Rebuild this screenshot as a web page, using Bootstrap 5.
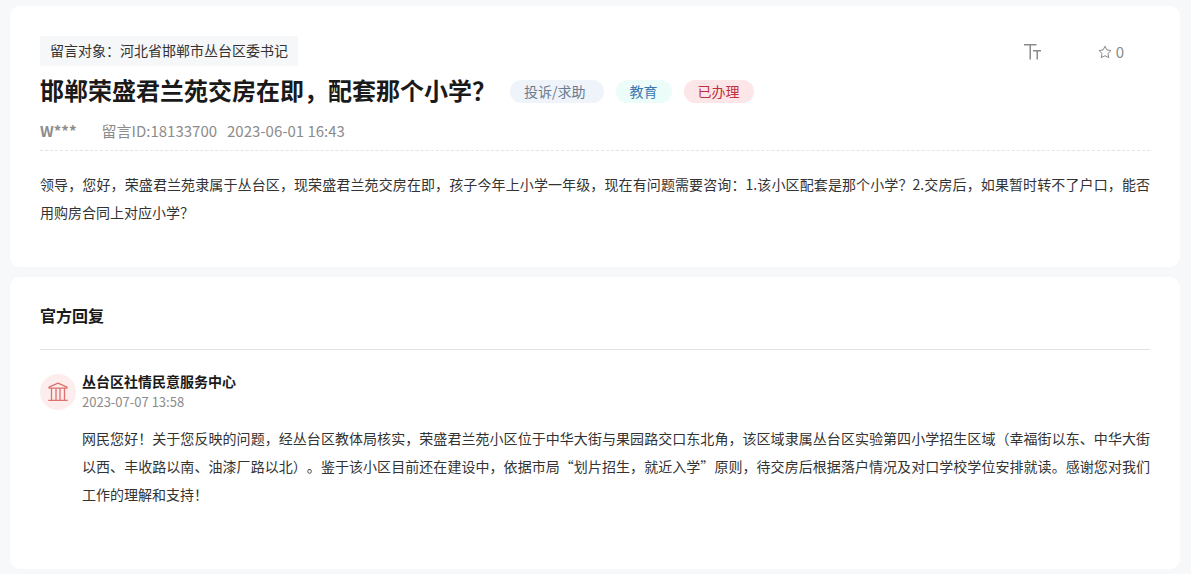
<!DOCTYPE html>
<html lang="zh-CN">
<head>
<meta charset="utf-8">
<meta name="viewport" content="width=device-width, initial-scale=1">
<title>邯郸荣盛君兰苑交房在即，配套那个小学？</title>
<link href="https://cdn.jsdelivr.net/npm/bootstrap@5.3.0/dist/css/bootstrap.min.css" rel="stylesheet">
<style>
  body { background: #f7f8fa; color: #333; font-family: "Noto Sans CJK SC", "Noto Sans", sans-serif; font-size: 14px; line-height: 20px; text-spacing-trim: space-all; }
  .page { padding: 6px 11px 5px 10px; gap: 10px; }
  .panel { background: #fff; border-radius: 10px; padding: 30px 30px 41px; }
  .panel-reply { padding: 22px 30px 61px; }
  .target { background: #f6f7f9; padding: 4px 10px 6px; }
  .tools { gap: 56px; padding: 6px 26px 0 0; color: #8a8a8a; }
  .tool { color: inherit; font-size: 15px; line-height: 20px; gap: 4px; }
  .title-row { column-gap: 14px; padding-top: 6px; }
  .title { font-size: 24px; line-height: 36px; font-weight: 700; color: #1a1a1a; }
  .tags { gap: 12px; padding-top: 2px; }
  .tag { border-radius: 12px; padding: 0 14px; line-height: 23px; }
  .tag-type { background: #eff3fa; color: #6a7b90; padding-right: 18px; }
  .tag-field { background: #ecfcf9; color: #3a78b0; }
  .tag-state { background: #fce6e8; color: #c02f40; }
  .meta { color: #8c8c8c; font-size: 15px; line-height: 24px; padding: 11px 0 7px; border-bottom: 1px dashed #e4e4e4; column-gap: 10px; }
  .author { margin-right: 15px; }
  .words { line-height: 28px; text-align: justify; }
  .message { padding-top: 19px; }
  .reply-title { font-size: 16px; line-height: 32px; font-weight: 700; color: #1a1a1a; padding-bottom: 18px; border-bottom: 1px solid #e3e3e3; }
  .reply { gap: 6px; padding-top: 21px; }
  .avatar { width: 36px; height: 36px; background: #fdeeed; margin-top: 3px; }
  .office { font-weight: 700; color: #1a1a1a; }
  .reply-date { color: #8c8c8c; font-size: 13px; line-height: 22px; }
  .answer { padding-top: 11px; }
</style>
</head>
<body>
<main class="page d-flex flex-column">
  <article class="panel">
    <div class="d-flex justify-content-between align-items-start">
      <div class="target">留言对象：河北省邯郸市丛台区委书记</div>
      <div class="tools d-flex flex-shrink-0">
        <button type="button" class="tool btn border-0 p-0 d-flex align-items-center" aria-label="字号">
          <svg width="18" height="18" viewBox="0 0 18 18" fill="none" stroke="currentColor" stroke-width="1.5" aria-hidden="true"><path d="M0 1.750h12.500M6.250 1.750V16.500M9 7.750h8M13.250 7.750v8.750"/></svg>
        </button>
        <button type="button" class="tool btn border-0 p-0 d-flex align-items-center" aria-label="收藏">
          <svg width="14" height="14" viewBox="0 0 14 14" fill="none" stroke="currentColor" stroke-linejoin="round" aria-hidden="true"><path d="M7 1.200l1.800 3.700 4.200.6-3 2.900.7 4.300L7 10.700l-3.700 2 .7-4.300-3-2.900 4.200-.6z"/></svg>
          <span>0</span>
        </button>
      </div>
    </div>
    <div class="title-row d-flex flex-wrap align-items-center">
      <h1 class="title mb-0">邯郸荣盛君兰苑交房在即，配套那个小学？</h1>
      <div class="tags d-flex">
        <span class="tag tag-type">投诉/求助</span>
        <span class="tag tag-field">教育</span>
        <span class="tag tag-state">已办理</span>
      </div>
    </div>
    <div class="meta d-flex flex-wrap">
      <strong class="author">W***</strong>
      <span>留言ID:18133700</span>
      <time datetime="2023-06-01T16:43">2023-06-01 16:43</time>
    </div>
    <p class="words message mb-0">领导，您好，荣盛君兰苑隶属于丛台区，现荣盛君兰苑交房在即，孩子今年上小学一年级，现在有问题需要咨询：1.该小区配套是那个小学？2.交房后，如果暂时转不了户口，能否用购房合同上对应小学？</p>
  </article>

  <section class="panel panel-reply">
    <h2 class="reply-title mb-0">官方回复</h2>
    <div class="reply d-flex align-items-start">
      <div class="avatar rounded-circle flex-shrink-0 d-flex align-items-center justify-content-center">
        <svg width="20" height="20" viewBox="0 0 20 20" fill="none" stroke="#de716d" stroke-width="1.300" stroke-linejoin="round" aria-hidden="true"><path d="M10 1.200L1 5.200v.9h18v-.9zM.3 18.400h19.400M3.500 6.500v11.700M8 6.500v11.700M12 6.500v11.700M16.500 6.500v11.700"/></svg>
      </div>
      <div class="flex-grow-1">
        <div class="office">丛台区社情民意服务中心</div>
        <time class="reply-date d-block" datetime="2023-07-07T13:58">2023-07-07 13:58</time>
        <p class="words answer mb-0">网民您好！关于您反映的问题，经丛台区教体局核实，荣盛君兰苑小区位于中华大街与果园路交口东北角，该区域隶属丛台区实验第四小学招生区域（幸福街以东、中华大街以西、丰收路以南、油漆厂路以北）。鉴于该小区目前还在建设中，依据市局“划片招生，就近入学”原则，待交房后根据落户情况及对口学校学位安排就读。感谢您对我们工作的理解和支持！</p>
      </div>
    </div>
  </section>
</main>
<script src="https://cdn.jsdelivr.net/npm/bootstrap@5.3.0/dist/js/bootstrap.bundle.min.js"></script>
</body>
</html>
